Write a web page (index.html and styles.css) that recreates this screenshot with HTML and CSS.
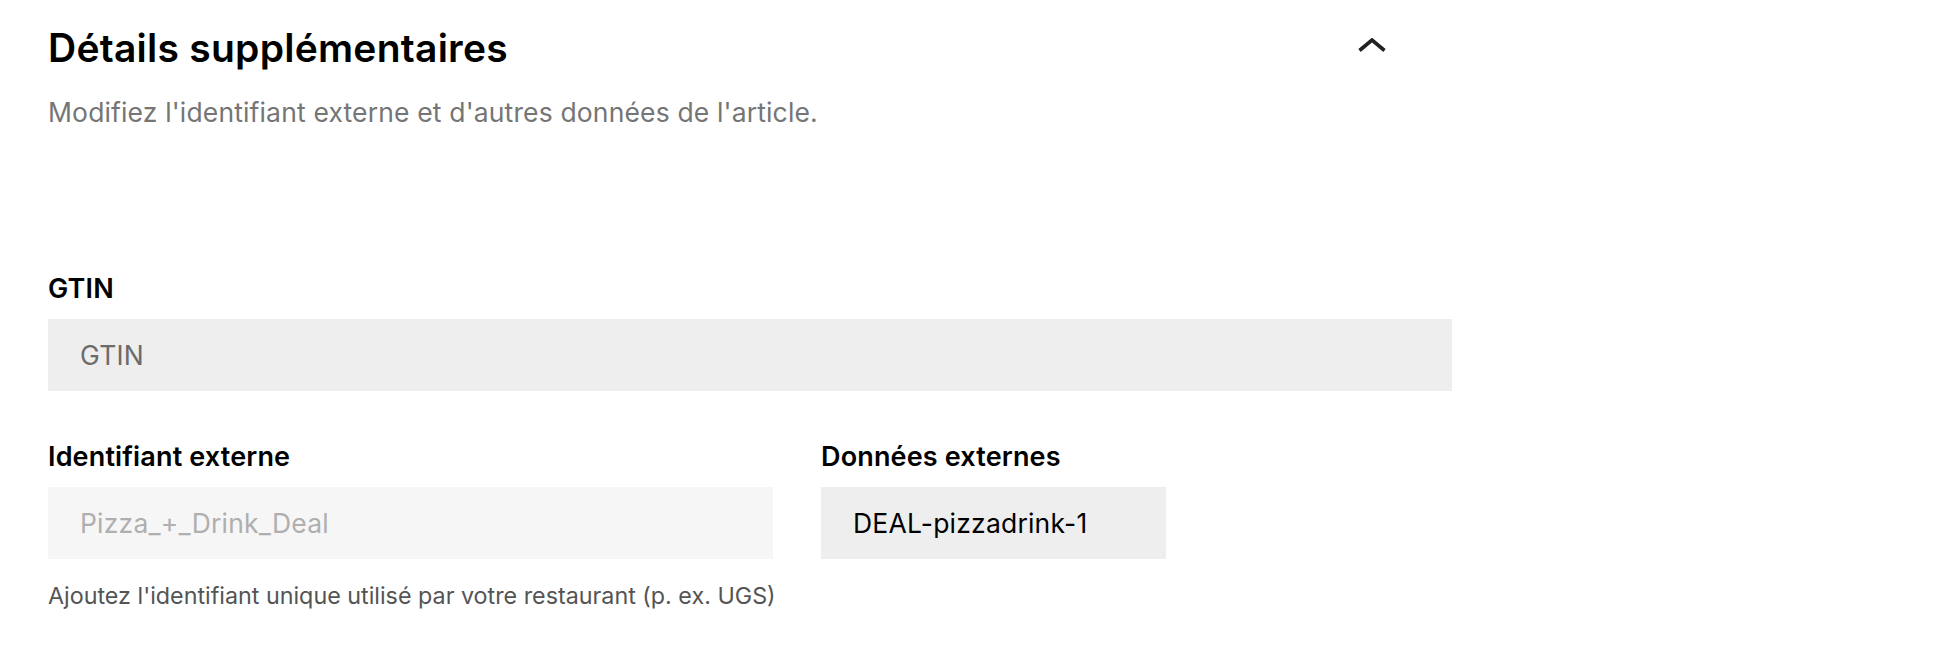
FILE: index.html
```html
<!DOCTYPE html>
<html lang="fr">
<head>
<meta charset="utf-8">
<title>Détails supplémentaires</title>
<link rel="stylesheet" href="styles.css">
</head>
<body>
<section class="details">
  <div class="details-header">
    <h2 class="details-title">Détails supplémentaires</h2>
    <button class="toggle" type="button" aria-label="Réduire">
      <svg width="28" height="14" viewBox="0 0 28 14" aria-hidden="true">
        <polyline points="1.5,12.5 14,2 26.5,12.5" fill="none" stroke="#222222" stroke-width="3.6" stroke-linejoin="miter"/>
      </svg>
    </button>
  </div>
  <p class="details-subtitle">Modifiez l'identifiant externe et d'autres données de l'article.</p>

  <div class="field field-gtin">
    <label class="field-label" for="gtin">GTIN</label>
    <input class="field-input" id="gtin" type="text" placeholder="GTIN">
  </div>

  <div class="field-row">
    <div class="field">
      <label class="field-label" for="extid">Identifiant externe</label>
      <input class="field-input field-input-disabled" id="extid" type="text" placeholder="Pizza_+_Drink_Deal" disabled>
      <p class="field-hint">Ajoutez l'identifiant unique utilisé par votre restaurant (p. ex. UGS)</p>
    </div>
    <div class="field">
      <label class="field-label" for="extdata">Données externes</label>
      <input class="field-input" id="extdata" type="text" value="DEAL-pizzadrink-1">
    </div>
  </div>
</section>
</body>
</html>
```

FILE: styles.css
```css
* {
  box-sizing: border-box;
}

html, body {
  margin: 0;
  padding: 0;
  background: #ffffff;
}

body {
  font-family: Inter, Roboto, "Liberation Sans", Arial, sans-serif;
  color: #000000;
}

.details {
  width: 1404px;
  margin-left: 48px;
  padding-top: 24px;
}

.details-header {
  display: flex;
  justify-content: space-between;
  align-items: flex-start;
}

.details-title {
  margin: 0;
  font-size: 39px;
  line-height: 48px;
  font-weight: 600;
  letter-spacing: 0.25px;
}

.toggle {
  margin: 14px 66px 0 0;
  padding: 0;
  border: 0;
  background: none;
  display: flex;
  cursor: pointer;
}

.details-subtitle {
  margin: 22px 0 0;
  font-size: 26.5px;
  line-height: 36px;
  letter-spacing: 0.15px;
  color: #757575;
}

.field {
  display: flex;
  flex-direction: column;
}

.field-gtin {
  margin-top: 141px;
}

.field-label {
  font-size: 27px;
  line-height: 36px;
  font-weight: 600;
  letter-spacing: 0.15px;
  margin-bottom: 12px;
}

.field-input {
  height: 72px;
  width: 100%;
  border: 0;
  outline: none;
  margin: 0;
  padding: 0 32px;
  background: #eeeeee;
  font-family: inherit;
  font-size: 26.5px;
  letter-spacing: 0.2px;
  color: #000000;
}

.field-input::placeholder {
  color: #6b6b6b;
  opacity: 1;
}

.field-input-disabled {
  background: #f6f6f6;
}

.field-input-disabled::placeholder {
  color: #afafaf;
}

.field-row {
  display: grid;
  grid-template-columns: 725px 345px;
  column-gap: 48px;
  margin-top: 48px;
}

.field-hint {
  margin: 21px 0 0;
  font-size: 23.3px;
  line-height: 32px;
  color: #545454;
  white-space: nowrap;
}
```
